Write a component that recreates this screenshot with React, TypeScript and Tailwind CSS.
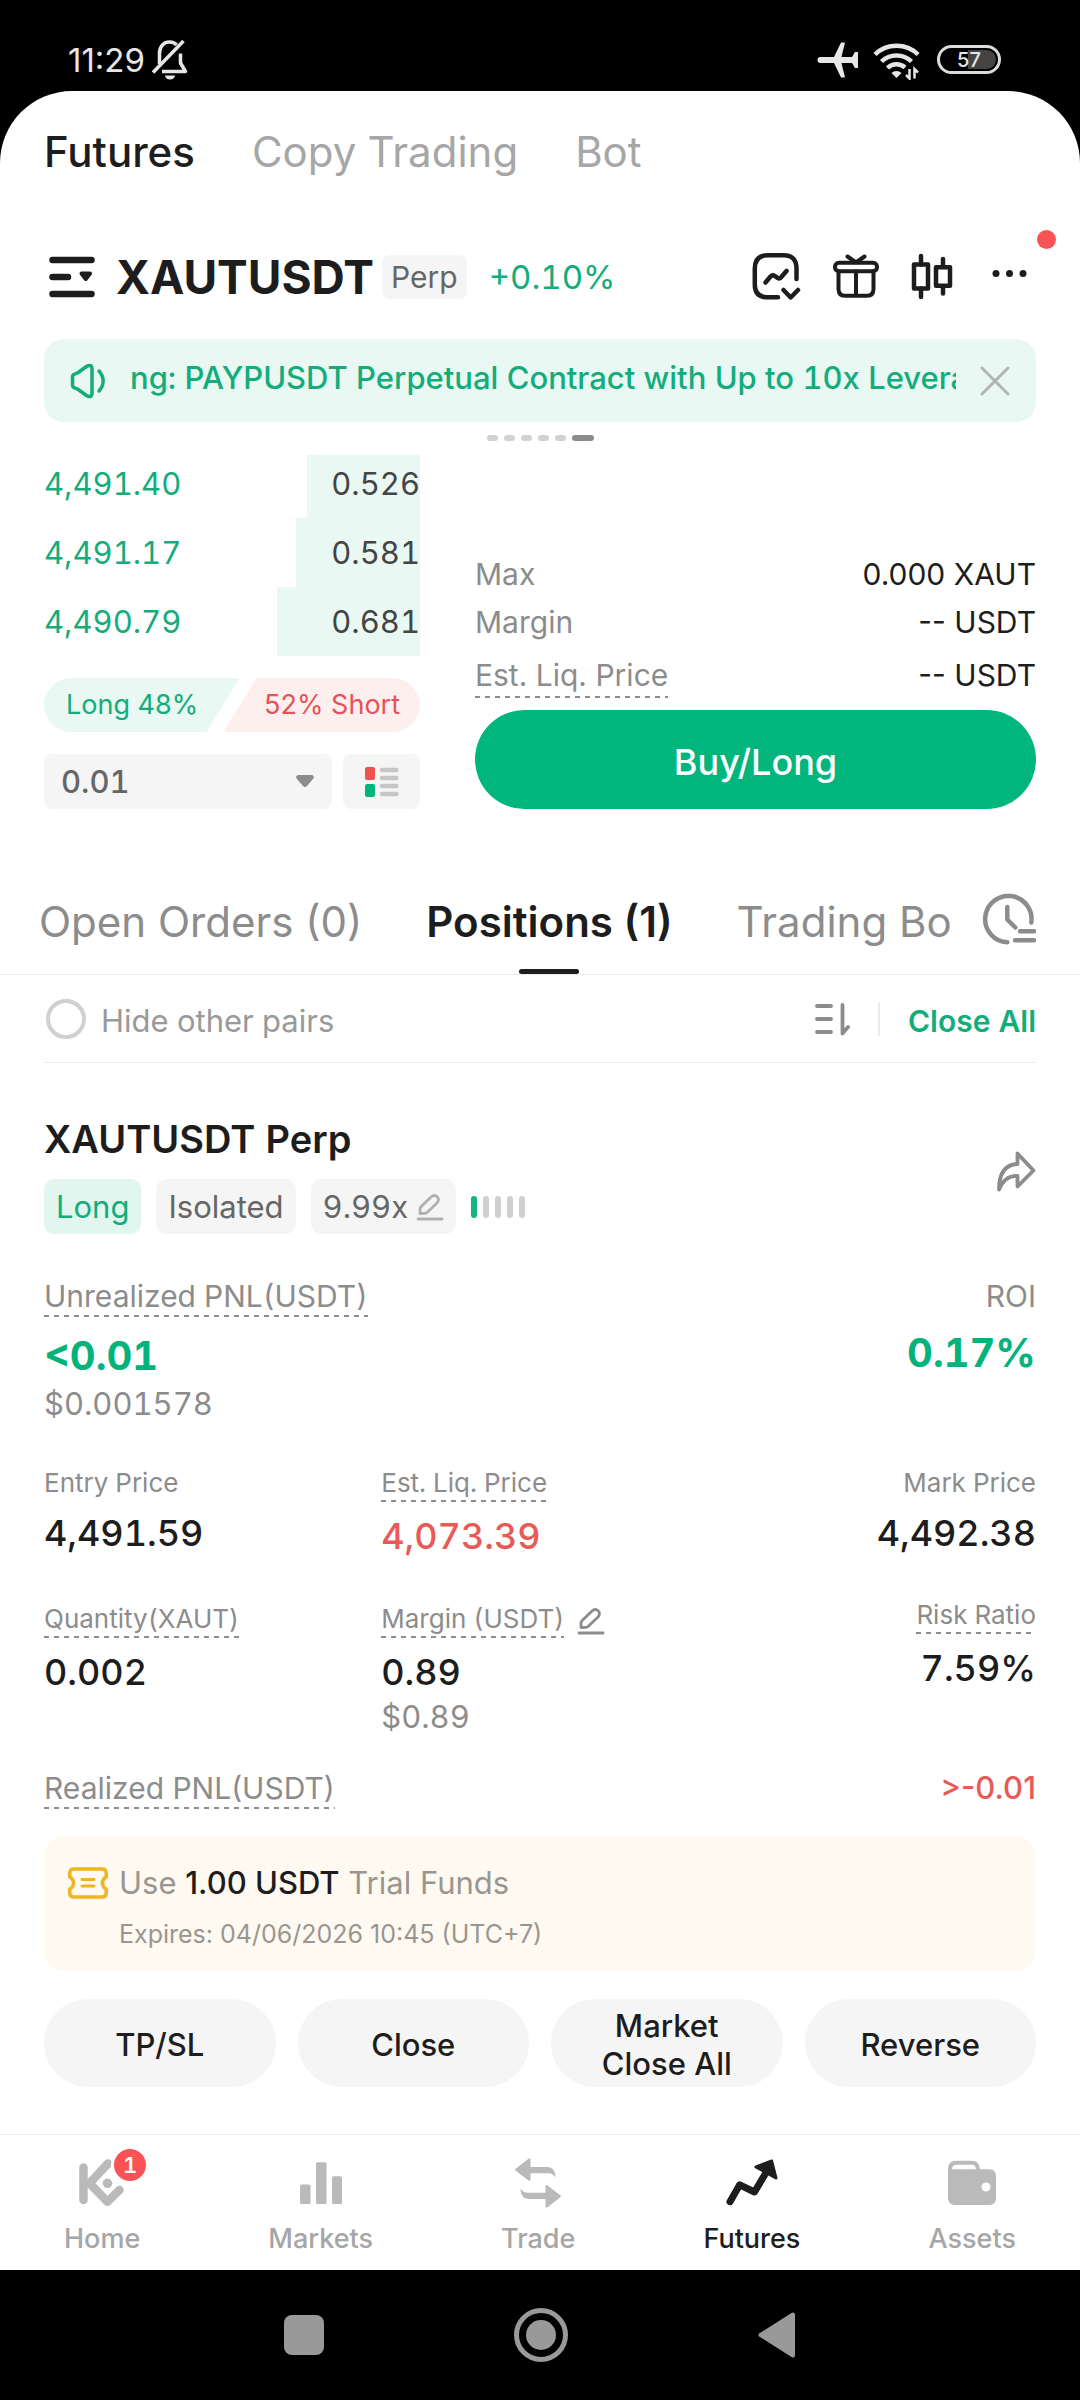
import { useState, type ReactNode } from 'react';

const bids = [
  { price: '4,491.40', size: '0.526', depth: 30 },
  { price: '4,491.17', size: '0.581', depth: 33 },
  { price: '4,490.79', size: '0.681', depth: 38 },
];

const actions = ['TP/SL', 'Close', 'Market Close All', 'Reverse'];

const dashed =
  'bg-[repeating-linear-gradient(90deg,#8c8c8c_0_5px,transparent_5px_10px)] bg-[length:100%_2px] bg-bottom bg-no-repeat pb-[3px]';

function StatusBar() {
  return (
    <div className="flex h-[91px] items-center justify-between px-[68px] pt-7 text-[#e6e6e6]">
      <div className="flex items-center gap-[7px]">
        <span className="text-[33px] leading-10">11:29</span>
        <svg width="36" height="42" viewBox="0 0 36 42" fill="none" stroke="currentColor" strokeWidth="3.500" strokeLinejoin="round">
          <path d="M7.500 25V14.500C7.500 7 12 3 17.500 3c3 0 5.500 1 7 3M28.500 14.500V24l5 8.500H10" />
          <path d="M1 33.500 31.500 2" />
          <path d="M13 36.500h10a5 4 0 0 1-10 0z" fill="currentColor" stroke="none" />
        </svg>
      </div>
      <div className="flex items-center pr-[11px]">
        <svg width="42" height="40" viewBox="0 0 42 40" fill="currentColor" className="mr-[14px]">
          <path d="M3.500 17H17L24 2.500h4L24.500 17H35l3-5h3v16h-3l-3-5H24.500L28 37.500h-4L17 23H3.500a3 3 0 0 1 0-6z" />
        </svg>
        <svg width="48" height="40" viewBox="0 0 48 40" fill="none" stroke="currentColor" strokeWidth="4.500" className="mr-4">
          <path d="M2 14.500a31 31 0 0 1 43 0M8.500 21.500a21.500 21.500 0 0 1 30 0M14.500 28a13 13 0 0 1 17.500-.5" />
          <path d="M18.500 33a7 7 0 0 1 10 0L23.500 38z" fill="currentColor" stroke="none" />
          <path d="M36.500 29v9.500l-3.500-3.500M41.500 38.500V29l3.500 3.500" strokeWidth="2.500" />
        </svg>
        <div className="relative flex h-[29px] w-16 items-center justify-center rounded-full border-[3px] border-[#dcdcdc]">
          <span className="absolute top-[2px] right-[2px] h-[19px] w-7 rounded-r-full bg-[#444]" />
          <span className="relative text-[20px] leading-none font-medium">57</span>
        </div>
      </div>
    </div>
  );
}

function PairHeader() {
  return (
    <div className="flex h-[56px] items-center px-11">
      <button aria-label="Markets list" className="ml-1">
        <svg width="48" height="42" viewBox="0 0 48 42" fill="none" stroke="#1d1d1d" strokeWidth="6.500" strokeLinecap="round">
          <path d="M4.500 4H43.500M4.500 21H20M4.500 38H43.500" />
          <path d="M33.500 17.500H42L37.750 23z" fill="#1d1d1d" strokeWidth="4" strokeLinejoin="round" />
        </svg>
      </button>
      <h1 className="ml-5 text-[46px] leading-[56px] font-bold text-[#1d1d1d]">XAUTUSDT</h1>
      <span className="ml-2 rounded-lg bg-[#f5f5f5] px-[9px] text-[30px] leading-[44px] text-[#666]">Perp</span>
      <span className="ml-[22px] text-[33px] leading-[44px] text-[#12ad7b]">+0.10%</span>
      <div className="ml-auto flex items-center gap-[31px]">
        <button aria-label="Indicators">
          <svg width="50" height="50" viewBox="0 0 50 50" fill="none" stroke="#1d1d1d" strokeWidth="4.500" strokeLinecap="round" strokeLinejoin="round">
            <path d="M45.500 27V16.500C45.500 7.500 41 3.300 33 3.300H16.500C8 3.300 3.800 7.500 3.800 16.500V32.500c0 8.500 4.200 12.800 12.700 12.800H27" />
            <path d="M14.500 30.500 19.500 24.500q2-2 4.500-.3l2.500 1.700q2 1.300 3.600-.6L35.500 19M32.500 38l7.200 7.500 7.300-7.500" />
          </svg>
        </button>
        <button aria-label="Rewards">
          <svg width="48" height="50" viewBox="0 0 48 50" fill="none" stroke="#1d1d1d" strokeWidth="4" strokeLinecap="round" strokeLinejoin="round">
            <rect x="3" y="10.700" width="42" height="8.500" rx="4" />
            <path d="M6.500 19V37c0 4.500 2 6.700 6.500 6.700H35c4.500 0 6.500-2.200 6.500-6.700V19M24 19.500V43.500M15.500 4.500 24 10.500l8.500-6" />
          </svg>
        </button>
        <button aria-label="Chart">
          <svg width="44" height="50" viewBox="0 0 44 50" fill="none" stroke="#1d1d1d" strokeWidth="4.500" strokeLinecap="round" strokeLinejoin="round">
            <path d="M10 4v8.500M10 36.500V45M32 7V15M32 34v7.500" />
            <rect x="3" y="12.500" width="14" height="24" />
            <rect x="25" y="15.300" width="14" height="18.500" />
          </svg>
        </button>
        <button aria-label="More" className="relative">
          <svg width="50" height="50" viewBox="0 0 50 50" fill="#1d1d1d">
            <circle cx="10" cy="21.500" r="3.500" />
            <circle cx="23.500" cy="21.500" r="3.500" />
            <circle cx="37" cy="21.500" r="3.500" />
          </svg>
          <span className="absolute -top-[22px] -right-5 size-[19px] rounded-full bg-[#f95355]" />
        </button>
      </div>
    </div>
  );
}

function Banner() {
  return (
    <div className="mx-11 mt-[34px] flex h-[83px] items-center rounded-[20px] bg-[#e9f8f3] pr-[25px] pl-[26px]">
      <svg width="38" height="36" viewBox="0 0 38 36" fill="none" stroke="#12ad7b" strokeWidth="3.500" strokeLinecap="round" strokeLinejoin="round" className="shrink-0">
        <path d="M2.500 14c0-1.500.7-2.300 2-2.800l3-1.200L16.500 3.500c3.500-2 5.500-1 5.500 2.500V30c0 3.500-2 4.500-5.500 2.500L7.500 26l-3-1.200c-1.300-.5-2-1.300-2-2.800z" />
        <path d="M29 8c5.500 6 5.500 14 0 20" />
      </svg>
      <p className="mr-[23px] ml-[22px] min-w-0 flex-1 overflow-hidden pb-1.5 text-[31px] leading-[44px] font-medium whitespace-nowrap text-[#12ad7b]">
        ng: PAYPUSDT Perpetual Contract with Up to 10x Leverage
      </p>
      <button aria-label="Dismiss">
        <svg width="32" height="32" viewBox="0 0 32 32" stroke="#b0b5b3" strokeWidth="3" strokeLinecap="round">
          <path d="M3 3 29 29M29 3 3 29" />
        </svg>
      </button>
    </div>
  );
}

function OrderBook() {
  return (
    <div>
      {bids.map((b) => (
        <div key={b.price} className="relative flex h-[69px] items-center justify-between text-[31px] leading-10 first:h-[63px] first:pb-1.5">
          <span className="absolute inset-y-0 right-0 bg-[#e9f8f3]" style={{ width: `${b.depth}%` }} />
          <span className="relative text-[#12ad7b]">{b.price}</span>
          <span className="relative text-[#444]">{b.size}</span>
        </div>
      ))}

      <div className="mt-[22px] flex h-[54px] items-center overflow-hidden rounded-full text-[27px] leading-[54px] normal-nums">
        <span className="h-full w-[52%] bg-[#e9f8f3] pl-[22px] text-[#12ad7b] [clip-path:polygon(0_0,100%_0,calc(100%-33px)_100%,0_100%)]">
          Long 48%
        </span>
        <span className="-ml-4 h-full flex-1 bg-[#feefef] pr-5 text-right text-[#e35358] [clip-path:polygon(33px_0,100%_0,100%_100%,0_100%)]">
          52% Short
        </span>
      </div>

      <div className="mt-[22px] flex h-[55px] gap-[11px]">
        <div className="relative flex-1">
          <select aria-label="Price step" className="h-full w-full appearance-none rounded-lg bg-[#f5f5f5] pt-0.5 pl-[17px] text-[31px] font-medium text-[#666]">
            <option>0.01</option>
          </select>
          <svg width="18" height="13" viewBox="0 0 18 13" fill="#8c8c8c" className="pointer-events-none absolute top-[21px] right-[18px]">
            <path d="M2.500 0h13C18 0 18.500 2.500 17 4l-6 7c-1.500 1.500-2.500 1.500-4 0L1 4C-.5 2.500 0 0 2.500 0z" />
          </svg>
        </div>
        <button aria-label="Order book layout" className="flex w-[77px] items-center justify-center rounded-lg bg-[#f5f5f5]">
          <svg width="34" height="30" viewBox="0 0 34 30">
            <rect width="10" height="13" rx="2" fill="#f0504f" />
            <rect y="17" width="10" height="13" rx="2" fill="#01b67d" />
            <path d="M17 3H31.500M17 11H31.500M17 19H31.500M17 27H31.500" stroke="#c6c6c6" strokeWidth="4.500" strokeLinecap="round" />
          </svg>
        </button>
      </div>
    </div>
  );
}

function OrderForm() {
  return (
    <div className="flex flex-col justify-end text-[30px] leading-10 normal-nums">
      <div className="flex justify-between">
        <span className="text-[#8c8c8c]">Max</span>
        <span className="text-[#1d1d1d]">0.000 XAUT</span>
      </div>
      <div className="mt-2 flex justify-between">
        <span className="text-[#8c8c8c]">Margin</span>
        <span className="text-[#1d1d1d]">-- USDT</span>
      </div>
      <div className="mt-[13px] flex justify-between">
        <span className={`${dashed} text-[#8c8c8c]`}>Est. Liq. Price</span>
        <span className="text-[#1d1d1d]">-- USDT</span>
      </div>
      <button className="mt-3 h-[99px] rounded-full bg-[#01b67d] pt-1 text-[36px] font-medium text-white">Buy/Long</button>
    </div>
  );
}

function Pencil({ color }: { color: string }) {
  return (
    <svg width="28" height="28" viewBox="0 0 28 28" fill="none" stroke={color} strokeWidth="2.800" strokeLinecap="round" strokeLinejoin="round">
      <path d="M4 20.500V16c0-1 .4-1.800 1.200-2.600l9.600-9.200c4.500-4 10.500 1 6.200 5.800l-9.400 9c-.8.900-1.700 1.300-2.800 1.400z" />
      <path d="M2 26H26" />
    </svg>
  );
}

function Stat({ label, value, hint, underline, edit, end, valueClass = 'text-[#1d1d1d]' }: {
  label: string;
  value: string;
  hint?: string;
  underline?: boolean;
  edit?: boolean;
  end?: boolean;
  valueClass?: string;
}) {
  return (
    <div className={`flex flex-col ${end ? 'items-end' : 'items-start'}`}>
      <div className="flex items-center gap-[13px] text-[26px] leading-8 text-[#8c8c8c]">
        <span className={underline ? dashed : ''}>{label}</span>
        {edit && (
          <button aria-label="Edit margin">
            <Pencil color="#8c8c8c" />
          </button>
        )}
      </div>
      <span className={`mt-3 text-[36px] leading-[44px] font-medium ${valueClass}`}>{value}</span>
      {hint && <span className="mt-[5px] text-[31px] leading-9 text-[#8c8c8c]">{hint}</span>}
    </div>
  );
}

function Position() {
  return (
    <section className="px-11">
      <div className="mt-[52px] flex justify-between">
        <div>
          <h2 className="text-[38px] leading-[48px] font-semibold text-[#1d1d1d]">XAUTUSDT Perp</h2>
          <div className="mt-4 flex h-[55px] items-center gap-[15px] text-[31px] leading-[55px]">
            <span className="rounded-[10px] bg-[#e0f6ef] px-3 text-[#12ad7b]">Long</span>
            <span className="rounded-[10px] bg-[#f5f5f5] px-3 text-[#666]">Isolated</span>
            <button className="flex items-center gap-2 rounded-[10px] bg-[#f5f5f5] px-3 text-[#666]">
              9.99x
              <Pencil color="#b0b0b0" />
            </button>
            <div className="flex gap-1.5">
              <span className="h-[22px] w-1.5 rounded-full bg-[#12b582]" />
              <span className="h-[22px] w-1.5 rounded-full bg-[#cfcfcf]" />
              <span className="h-[22px] w-1.5 rounded-full bg-[#cfcfcf]" />
              <span className="h-[22px] w-1.5 rounded-full bg-[#cfcfcf]" />
              <span className="h-[22px] w-1.5 rounded-full bg-[#cfcfcf]" />
            </div>
          </div>
        </div>
        <button aria-label="Share position" className="mt-9 self-start">
          <svg width="40" height="41" viewBox="0 0 40 41" fill="none" stroke="#8c8c8c" strokeWidth="3.800" strokeLinejoin="round">
            <path d="M21.500 2.500 37.500 19.500 21.500 35.500V25C13 24.500 7 29 3 38.500 3 22 9 13.500 21.500 13z" />
          </svg>
        </button>
      </div>

      <div className="mt-11 flex justify-between">
        <div className="flex flex-col items-start">
          <span className={`${dashed} text-[30px] leading-9 text-[#8c8c8c]`}>Unrealized PNL(USDT)</span>
          <span className="mt-[15px] text-[40px] leading-[48px] font-bold text-[#04b27c]">&lt;0.01</span>
          <span className="mt-1.5 text-[31px] leading-9 text-[#8c8c8c]">$0.001578</span>
        </div>
        <div className="flex flex-col items-end">
          <span className="text-[30px] leading-9 text-[#8c8c8c]">ROI</span>
          <span className="mt-[15px] text-[40px] leading-[48px] font-bold text-[#04b27c]">0.17%</span>
        </div>
      </div>

      <div className="mt-[45px] grid grid-cols-[34%_33%_33%]">
        <Stat label="Entry Price" value="4,491.59" />
        <Stat label="Est. Liq. Price" value="4,073.39" underline valueClass="text-[#e85a58]" />
        <Stat label="Mark Price" value="4,492.38" end />
      </div>
      <div className="mt-[41px] grid grid-cols-[34%_33%_33%] [&>*:not(:last-child)]:pt-1">
        <Stat label="Quantity(XAUT)" value="0.002" underline />
        <Stat label="Margin (USDT)" value="0.89" hint="$0.89" underline edit />
        <Stat label="Risk Ratio" value="7.59%" underline end />
      </div>

      <div className="mt-[35px] flex justify-between text-[30px] leading-9 normal-nums">
        <span className={`${dashed} text-[#8c8c8c]`}>Realized PNL(USDT)</span>
        <span className="text-[31px] font-medium text-[#e85a58]">&gt;-0.01</span>
      </div>

      <div className="mt-[27px] flex rounded-[20px] bg-[#fffaf1] px-6 pt-[29px] pb-[21px] normal-nums">
        <svg width="40" height="32" viewBox="0 0 40 32" fill="none" stroke="#efb41f" strokeLinecap="round" strokeLinejoin="round" className="mt-0.5">
          <path d="M6 2H34c3 0 4.200 1.300 4.200 4v4c-5 2.500-5 9.500 0 12v4c0 2.700-1.200 4-4.200 4H6c-3 0-4.200-1.300-4.200-4v-4c5-2.500 5-9.500 0-12V6C1.800 3.300 3 2 6 2z" strokeWidth="3.500" />
          <path d="M14 12.500H26M14 19H26" strokeWidth="3" />
        </svg>
        <div className="ml-[11px]">
          <p className="text-[31px] leading-9 text-[#999690]">
            Use <span className="font-medium text-[#1d1d1d]">1.00 USDT</span> Trial Funds
          </p>
          <p className="mt-[17px] text-[25px] leading-8 text-[#999690]">Expires: 04/06/2026 10:45 (UTC+7)</p>
        </div>
      </div>

      <div className="mt-7 grid grid-cols-4 gap-[22px]">
        {actions.map((a) => (
          <button key={a} className="h-[88px] rounded-full bg-[#f5f5f5] px-10 pt-1 text-[31px] leading-[38px] font-medium text-[#1d1d1d]">
            {a}
          </button>
        ))}
      </div>
    </section>
  );
}

function NavItem({ label, active, children }: { label: string; active?: boolean; children: ReactNode }) {
  return (
    <a href="#" className={`flex flex-col items-center gap-[15px] text-[27px] leading-8 ${active ? 'text-[#1d1d1d]' : 'text-[#a6a6a6]'}`}>
      <span className={`relative ${active ? '' : 'text-[#bababa]'}`}>{children}</span>
      <span className="font-medium">{label}</span>
    </a>
  );
}

function TradeArrow({ flip }: { flip?: boolean }) {
  return (
    <path
      d="M.7 10.800 13.500.8c1-.7 2-.2 2 1V9H32c5.500 0 8.500 4 8.500 10.500-2-3-4-4.200-7.500-4.200H15.500V21.500c0 1.300-1 1.700-2 1L.7 12.800c-.8-.6-.8-1.400 0-2z"
      transform={flip ? 'rotate(180 23 25)' : undefined}
    />
  );
}

function BottomNav() {
  return (
    <nav className="mt-[47px] flex justify-between border-t border-[#ebebeb] px-16 pt-[23px] pb-[15px]">
      <NavItem label="Home">
        <svg width="46" height="50" viewBox="0 0 46 50" fill="none" stroke="currentColor" strokeWidth="8.500" strokeLinecap="round">
          <path d="M4.500 9.500V42" />
          <path d="M29 5.500 10.500 25.300 28.500 43.700 40.500 32" strokeLinejoin="round" />
          <circle cx="28.500" cy="25.300" r="4.800" fill="currentColor" stroke="none" />
        </svg>
        <span className="absolute -top-3 -right-6 flex size-[38px] items-center justify-center rounded-full border-[3px] border-white bg-[#f95355] text-[22px] leading-none font-semibold text-white">
          1
        </span>
      </NavItem>
      <NavItem label="Markets">
        <svg width="42" height="50" viewBox="0 0 42 50" fill="currentColor">
          <rect y="26.500" width="10.500" height="19.500" rx="1.500" />
          <rect x="16" y="4.200" width="10.500" height="41.800" rx="1.500" />
          <rect x="32" y="18.300" width="10" height="27.700" rx="1.500" />
        </svg>
      </NavItem>
      <NavItem label="Trade">
        <svg width="46" height="50" viewBox="0 0 46 50" fill="currentColor">
          <TradeArrow />
          <TradeArrow flip />
        </svg>
      </NavItem>
      <NavItem label="Futures" active>
        <svg width="54" height="50" viewBox="0 0 54 50" fill="none" stroke="currentColor" strokeWidth="7" strokeLinecap="round" strokeLinejoin="round">
          <path d="M5 43.700 14.700 26.800 29.500 34 42 13" />
          <path d="M31 9 46.700 3 51 20z" fill="currentColor" strokeWidth="3" />
        </svg>
      </NavItem>
      <NavItem label="Assets">
        <svg width="48" height="50" viewBox="0 0 48 50" fill="currentColor">
          <path fillRule="evenodd" d="M8 2.700H24c5 0 7.500 3.300 8 8.500h9c4.500 0 7 2.500 7 7V40c0 4.500-2.500 7-7 7H8c-5 0-8-2.500-8-7V11.200C0 6 3 2.700 8 2.700zM9 6.800C6 6.800 4.200 8 4 11.200H28c-.3-3.200-1.500-4.400-4-4.400zM38 24.500a4.500 4.500 0 1 0 0 9 4.500 4.500 0 0 0 0-9z" />
        </svg>
      </NavItem>
    </nav>
  );
}

function SystemKeys() {
  return (
    <div className="flex h-[130px] items-center justify-center gap-[190px]">
      <button aria-label="Recents" className="size-10 rounded-lg bg-[#999]" />
      <button aria-label="Home" className="flex size-[54px] items-center justify-center rounded-full border-[5px] border-[#999]">
        <span className="size-[30px] rounded-full bg-[#999]" />
      </button>
      <button aria-label="Back">
        <svg width="38" height="46" viewBox="0 0 38 46" fill="#999" stroke="#999" strokeWidth="4" strokeLinejoin="round">
          <path d="M2.500 23 35 2.500V43.500z" />
        </svg>
      </button>
    </div>
  );
}

export default function App() {
  const [hideOthers, setHideOthers] = useState(false);

  return (
    <div className="min-h-screen bg-black font-['Inter',sans-serif]">
      <StatusBar />
      <main className="rounded-t-[72px] bg-white tabular-nums">
        <nav className="flex gap-[57px] px-11 pt-[37px] pb-[73px] text-[42px] leading-[48px] text-[#a6a6a6]">
          <a href="#" className="font-medium text-[#1d1d1d]">Futures</a>
          <a href="#">Copy Trading</a>
          <a href="#">Bot</a>
        </nav>
        <PairHeader />
        <Banner />

        {/* carousel position */}
        <div className="mt-[13px] flex justify-center gap-1.5">
          {[0, 1, 2, 3, 4].map((i) => (
            <span key={i} className="h-1.5 w-[11px] rounded-full bg-[#d2d2d2]" />
          ))}
          <span className="h-1.5 w-[22px] rounded-full bg-[#8c8c8c]" />
        </div>

        <div className="mt-[14px] grid grid-cols-[376fr_561fr] gap-[55px] px-11">
          <OrderBook />
          <OrderForm />
        </div>

        <div className="flex items-start justify-between border-b border-[#ebebeb] pt-[89px] pr-11 pl-[39px]">
          <div className="flex gap-16 pb-7 text-[42px] leading-[48px] whitespace-nowrap text-[#8c8c8c] normal-nums">
            <a href="#">Open Orders (0)</a>
            <a href="#" className="relative font-semibold text-[#1d1d1d]">
              Positions (1)
              <span className="absolute -bottom-7 left-1/2 h-[5px] w-[60px] -translate-x-1/2 rounded-full bg-[#1d1d1d]" />
            </a>
            <a href="#">Trading Bo</a>
          </div>
          <button aria-label="Order history" className="-mt-1.5">
            <svg width="54" height="54" viewBox="0 0 54 54" fill="none" stroke="#8c8c8c" strokeWidth="4.500" strokeLinecap="round" strokeLinejoin="round">
              <path d="M49.300 30.500A23.200 23.200 0 1 0 25.300 50.300" />
              <path d="M25.300 15V27.500l8 8M38 39.300H52M33 48.300H52" />
            </svg>
          </button>
        </div>

        <div className="mx-11 flex h-[88px] items-center border-b border-[#ebebeb]">
          <label className="flex items-center gap-[15px] text-[31px] leading-10 text-[#999]">
            <input
              type="checkbox"
              checked={hideOthers}
              onChange={(e) => setHideOthers(e.target.checked)}
              className="ml-0.5 size-10 appearance-none rounded-full border-4 border-[#d0d0d0] checked:bg-[#01b67d]"
            />
            <span className="pt-1">Hide other pairs</span>
          </label>
          <button aria-label="Sort" className="ml-auto">
            <svg width="36" height="36" viewBox="0 0 36 36" fill="none" stroke="#8c8c8c" strokeWidth="3.800" strokeLinecap="round" strokeLinejoin="round">
              <path d="M3 5H17M3 18H17M3 31H17M28.500 4V32.500L34 26" />
            </svg>
          </button>
          <span className="mx-7 h-[34px] w-0.5 bg-[#ebebeb]" />
          <button className="pt-1 text-[30px] leading-10 font-semibold text-[#12ad7b]">Close All</button>
        </div>

        <Position />
        <BottomNav />
      </main>
      <SystemKeys />
    </div>
  );
}
